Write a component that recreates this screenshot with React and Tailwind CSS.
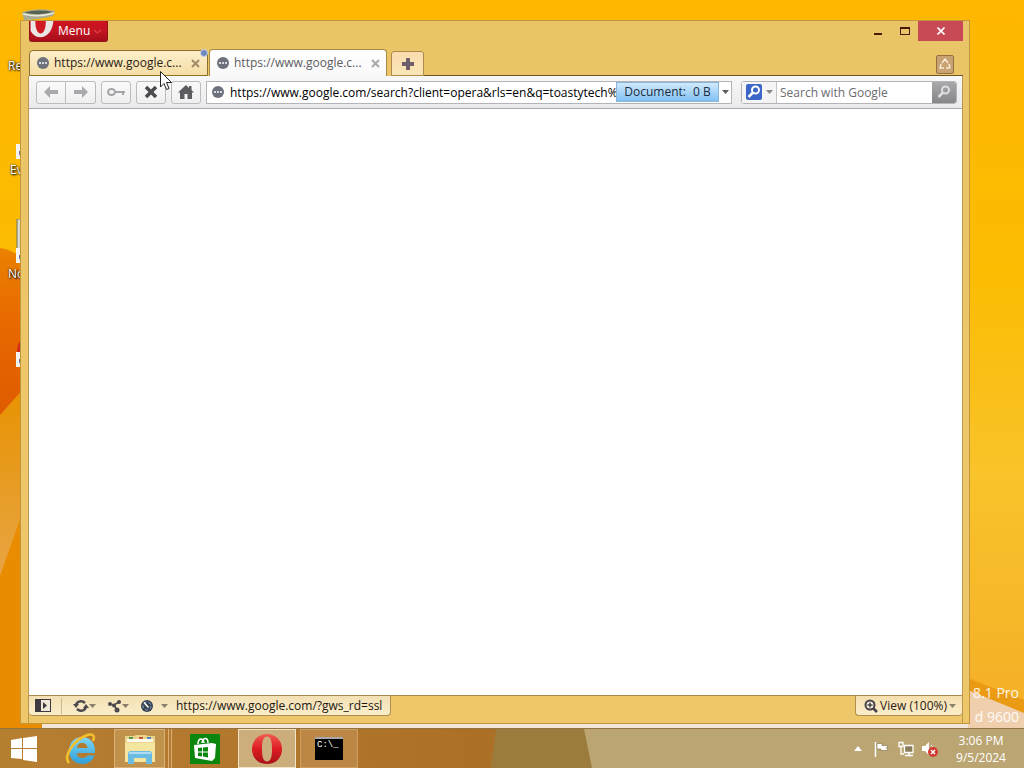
import React from "react";

const Wallpaper = () => (
  <svg
    className="absolute inset-0 w-full h-full"
    viewBox="0 0 1024 728"
    preserveAspectRatio="none"
    aria-hidden="true"
  >
    <defs>
      <linearGradient id="sky" x1="0" y1="0" x2="0" y2="1">
        <stop offset="0" stopColor="#ffb700" />
        <stop offset="0.38" stopColor="#fbbc02" />
        <stop offset="0.65" stopColor="#f9c32a" />
        <stop offset="1" stopColor="#f4ae28" />
      </linearGradient>
      <linearGradient id="hill" x1="0" y1="0" x2="0" y2="1">
        <stop offset="0" stopColor="#ea8200" />
        <stop offset="0.4" stopColor="#e86a00" />
        <stop offset="1" stopColor="#df5a00" />
      </linearGradient>
      <linearGradient id="facet" x1="0" y1="388" x2="0" y2="580" gradientUnits="userSpaceOnUse">
        <stop offset="0" stopColor="#e89200" />
        <stop offset="0.4" stopColor="#e79a1c" />
        <stop offset="1" stopColor="#e9a545" />
      </linearGradient>
    </defs>
    <rect width="1024" height="728" fill="url(#sky)" />
    <path d="M0 248 Q14 250 24 260 V420 H0Z" fill="url(#hill)" />
    <path d="M0 415 L24 388 V728 H0Z" fill="url(#facet)" />
    <path d="M0 576 L24 508 V722 L42 722 V728 H0Z" fill="#ea8c00" />
    <path d="M42 722 H1024 V728 H42Z" fill="#f3e6d8" />
    <path d="M968 688 L1024 712 V728 H968Z" fill="#f0cfae" />
    <path d="M968 678 L1024 700 V713 L968 690Z" fill="#eb9a14" />
  </svg>
);

const Label = ({ children, className }) => (
  <span
    className={`absolute text-xs leading-4 text-white [text-shadow:1px_1px_2px_#000,0_0_2px_#000] ${className}`}
  >
    {children}
  </span>
);

const ShortcutArrow = ({ className }) => (
  <svg className={`absolute w-4 h-4 ${className}`} viewBox="0 0 16 16">
    <rect width="16" height="15" fill="#f4f4f4" />
    <path d="M3 12 V7 H6 V4 L11 8 L6 12 V10 H4Z" fill="#5a6f95" />
  </svg>
);

const DesktopIcons = () => (
  <>
    <Label className="left-2 top-[58px]">Re</Label>
    <ShortcutArrow className="left-4 top-36" />
    <Label className="left-[10px] top-[162px]">Ev</Label>
    <svg className="absolute left-4 top-[219px] w-4 h-8" viewBox="0 0 16 32">
      <rect x="1" width="15" height="30" fill="#d9dccb" stroke="#6c7466" />
    </svg>
    <ShortcutArrow className="left-4 top-[248px]" />
    <Label className="left-2 top-[266px]">No</Label>
    <svg className="absolute left-4 top-[336px] w-4 h-4" viewBox="0 0 16 16">
      <path d="M1 16 Q1 6 8 1 H16 V16Z" fill="#d3281c" />
    </svg>
    <ShortcutArrow className="left-4 top-[352px]" />
  </>
);

const RecycleBin = () => (
  <svg className="absolute left-5 top-2 w-9 h-3" viewBox="0 0 36 12" aria-hidden="true">
    <path d="M2 4 Q18 -1 35 3 L33 8 Q18 12 4 12Z" fill="#a9ac92" />
    <path d="M4 4.500 Q18 1 33 4 Q20 8 4 4.500Z" fill="#566152" />
    <path d="M3 6 Q18 10 34 5" stroke="#e9ead8" strokeWidth="1.500" fill="none" />
  </svg>
);

const OperaO = ({ className }) => (
  <svg className={className} viewBox="0 0 32 32" aria-hidden="true">
    <defs>
      <linearGradient id="operaRed" x1="0" y1="0" x2="0" y2="1">
        <stop offset="0" stopColor="#f25a52" />
        <stop offset="0.5" stopColor="#dc1c22" />
        <stop offset="1" stopColor="#a81016" />
      </linearGradient>
    </defs>
    <path
      fillRule="evenodd"
      fill="url(#operaRed)"
      d="M16 1 C24.500 1 31 7.500 31 16 C31 25 24.500 31 16 31 C7.500 31 1 25 1 16 C1 7.500 7.500 1 16 1Z M16 3.500 C12 3.500 11 9 11 16 C11 23 12 28.500 16 28.500 C20 28.500 21 23 21 16 C21 9 20 3.500 16 3.500Z"
    />
  </svg>
);

const SiteIcon = () => (
  <svg className="w-3 h-3 shrink-0" viewBox="0 0 12 12" aria-hidden="true">
    <circle cx="6" cy="6" r="6" fill="#6d717b" />
    <circle cx="3" cy="6" r="1" fill="#fff" />
    <circle cx="6" cy="6" r="1" fill="#fff" />
    <circle cx="9" cy="6" r="1" fill="#fff" />
  </svg>
);

const Caret = ({ className = "text-[#8b806c]" }) => (
  <svg className={`w-[7px] h-1 shrink-0 ${className}`} viewBox="0 0 7 4" aria-hidden="true">
    <path d="M0 0 H7 L3.500 4Z" fill="currentColor" />
  </svg>
);

const CloseX = ({ className }) => (
  <svg className={`w-[9px] h-[9px] ${className}`} viewBox="0 0 9 9" aria-hidden="true">
    <path d="M1 1 L8 8 M8 1 L1 8" stroke="currentColor" strokeWidth="2" />
  </svg>
);

const Magnifier = ({ className }) => (
  <svg className={className} viewBox="0 0 16 16" aria-hidden="true">
    <circle cx="9.500" cy="6" r="3.500" fill="none" stroke="currentColor" strokeWidth="2" />
    <path d="M7 8.500 L2.500 13" stroke="currentColor" strokeWidth="2.500" />
  </svg>
);

const TitleBar = () => (
  <div className="flex items-start justify-between h-7">
    <button className="flex items-center h-[21px] w-[79px] rounded-b-[3px] border border-t-0 border-[#8e1417] bg-linear-to-b from-[#d0131f] via-[#c31522] to-[#a60d19] text-xs text-white">
      <svg className="w-6 h-full shrink-0" viewBox="0 0 24 21" aria-hidden="true">
        <path d="M0 0 H24 C23 10 18 17 10 17 C5 17 2 14 0 10Z" fill="#e9e6e4" />
        <path d="M5 0 H16 C16 8 14 13 10.500 13 C7 13 5 8 5 0Z" fill="#cf1a22" />
      </svg>
      <span className="ml-1">Menu</span>
      <svg className="ml-1 w-[7px] h-[5px]" viewBox="0 0 7 5" aria-hidden="true">
        <path d="M0 1 L3.500 4 L7 1" fill="none" stroke="#ee5c5c" />
      </svg>
    </button>
    <div className="flex h-5">
      <button aria-label="Minimize" className="w-[27px] flex justify-center items-center">
        <svg className="w-2 h-5" viewBox="0 0 8 20">
          <rect y="12" width="8" height="2" fill="#4a1a08" />
        </svg>
      </button>
      <button aria-label="Maximize" className="w-[27px] flex justify-center items-center">
        <svg className="w-[10px] h-5" viewBox="0 0 10 20">
          <path d="M0 6 H10 V14 H0Z M1 8 V13 H9 V8Z" fill="#4a1a08" fillRule="evenodd" />
        </svg>
      </button>
      <button
        aria-label="Close"
        className="w-[45px] flex justify-center items-center bg-[#c84a55] text-white"
      >
        <svg className="w-2 h-2" viewBox="0 0 8 8">
          <path d="M0.500 0.500 L7.500 7.500 M7.500 0.500 L0.500 7.500" stroke="currentColor" strokeWidth="1.600" />
        </svg>
      </button>
    </div>
  </div>
);

const TabBar = () => (
  <div className="flex items-end h-[27px]">
    <div className="relative flex items-center w-[179px] h-[26px] pl-[7px] pr-[7px] rounded-t-[4px] border border-[#8f6f2c] bg-linear-to-b from-[#fdefc9] to-[#f5dda6] text-[#2a2116]">
      <SiteIcon />
      <button className="ml-[5px] flex-1 text-left whitespace-nowrap">https://www.google.c...</button>
      <button aria-label="Close tab">
        <CloseX className="text-[#a08b66]" />
      </button>
      <span className="absolute -top-[2px] -right-[1px] w-2 h-2 rounded-full border border-[#c9d3ea] bg-[#7088bd]"></span>
    </div>
    <div className="flex items-center w-[178px] h-[27px] ml-px pl-[7px] pr-[6px] rounded-t-[4px] border border-b-0 border-[#a88a45] bg-linear-to-b from-white to-[#f8f8f8] text-[#5c5c62]">
      <SiteIcon />
      <button className="ml-[5px] flex-1 text-left whitespace-nowrap">https://www.google.c...</button>
      <button aria-label="Close tab">
        <CloseX className="text-[#aaaaac]" />
      </button>
    </div>
    <button
      aria-label="New tab"
      className="flex items-center justify-center w-[33px] h-[25px] ml-1 rounded-t-[3px] border border-[#b08a4a] bg-linear-to-b from-[#fbdcae] to-[#f9e6b8]"
    >
      <svg className="w-3 h-3" viewBox="0 0 12 12">
        <path d="M4 0 H8 V4 H12 V8 H8 V12 H4 V8 H0 V4 H4Z" fill="#6f5f68" />
      </svg>
    </button>
    <div className="flex-1 h-full pr-[9px] border-b border-[#6f5320] flex justify-end items-center">
      <button
        aria-label="Closed tabs"
        className="flex items-center justify-center w-[18px] h-[19px] mt-1 rounded-[2px] border border-[#96713f] bg-[#c9a273]"
      >
        <svg className="w-3 h-3" viewBox="0 0 12 12">
          <path
            d="M3 5 L6 1 L9 5 M2 6 L1 10 H5 M11 10 L10 6 M7 10 H11"
            fill="none"
            stroke="#f8e8d4"
            strokeWidth="1.500"
          />
        </svg>
      </button>
    </div>
  </div>
);

const ToolButton = ({ label, className = "rounded-[3px]", children }) => (
  <button
    aria-label={label}
    className={`flex items-center justify-center w-[30px] h-[23px] border border-[#bcbcc0] bg-linear-to-b from-[#fafafa] to-[#efeff0] ${className}`}
  >
    {children}
  </button>
);

const Toolbar = () => (
  <div className="flex items-center h-[33px] pl-[7px] pr-[5px] border-b border-[#a9a9ad] bg-linear-to-b from-[#f8f8f8] to-[#eaeaec]">
    <ToolButton label="Back" className="rounded-l-[3px]">
      <svg className="w-[14px] h-3" viewBox="0 0 14 12">
        <path d="M0 6 L6 0 V4 H14 V8 H6 V12Z" fill="#aaaaae" />
      </svg>
    </ToolButton>
    <ToolButton label="Forward" className="rounded-r-[3px] border-l-0">
      <svg className="w-[14px] h-3" viewBox="0 0 14 12">
        <path d="M14 6 L8 0 V4 H0 V8 H8 V12Z" fill="#aaaaae" />
      </svg>
    </ToolButton>
    <div className="flex gap-[5px] ml-[5px]">
      <ToolButton label="Wand">
        <svg className="w-[18px] h-[10px]" viewBox="0 0 18 10">
          <ellipse cx="4.500" cy="5" rx="3.500" ry="3" fill="none" stroke="#a6a6aa" strokeWidth="2" />
          <path d="M8 4 H18 V6 H17 V8 H15 V6 H8Z" fill="#a6a6aa" />
        </svg>
      </ToolButton>
      <ToolButton label="Stop">
        <svg className="w-[14px] h-[14px]" viewBox="0 0 14 14">
          <path d="M2 2 L12 12 M12 2 L2 12" stroke="#4a4a4e" strokeWidth="3.500" />
        </svg>
      </ToolButton>
      <ToolButton label="Home">
        <svg className="w-4 h-[14px]" viewBox="0 0 16 14">
          <path d="M8 0 L11 3 V1 H13.500 V5 L16 7.500 H14 V14 H9.500 V9 H6.500 V14 H2 V7.500 H0Z" fill="#5c5c60" />
        </svg>
      </ToolButton>
    </div>
    <div className="flex flex-1 items-center min-w-0 h-[23px] ml-[5px] pl-[5px] border border-[#b4b4b8] bg-white">
      <SiteIcon />
      <input
        aria-label="Address"
        className="flex-1 min-w-0 h-full pt-px ml-[6px] outline-none text-black"
        defaultValue="https://www.google.com/search?client=opera&rls=en&q=toastytech%"
      />
      <div className="flex items-center justify-center gap-[7px] w-[103px] h-5 border border-[#8ab4d8] bg-linear-to-b from-[#cfe9fc] via-[#a9d6f8] to-[#7fc0f2] text-[#1d2b3c]">
        <span>Document:</span>
        <span>0 B</span>
      </div>
      <button aria-label="Address history" className="flex items-center justify-center w-3 h-full">
        <Caret className="text-[#5b5b60]" />
      </button>
    </div>
    <div className="flex items-center w-[216px] h-[23px] ml-[9px] rounded-[3px] border border-[#b4b4b8] bg-white">
      <button
        aria-label="Search engine"
        className="flex items-center gap-1 h-full w-[35px] pl-1 border-r border-[#c4c4c8] bg-[#f4f4f5]"
      >
        <span className="flex items-center justify-center w-4 h-4 rounded-[2px] bg-[#3c66c8] text-white">
          <Magnifier className="w-4 h-4" />
        </span>
        <Caret className="text-[#88888c]" />
      </button>
      <input
        aria-label="Search"
        placeholder="Search with Google"
        className="flex-1 min-w-0 h-full pt-px pl-[3px] outline-none placeholder:text-[#6c6c70]"
      />
      <button
        aria-label="Go"
        className="flex items-center justify-center w-6 h-full rounded-r-[2px] bg-linear-to-b from-[#a9a9ab] to-[#87878a] text-[#dededf]"
      >
        <Magnifier className="w-4 h-4" />
      </button>
    </div>
  </div>
);

const StatusBar = () => (
  <div className="flex items-start justify-between h-[28px] border-t border-[#a98a48]">
    <div className="flex items-center h-5 pl-[6px] pr-2 rounded-b-[4px] border border-t-0 border-l-0 border-[#b0904e] bg-linear-to-b from-[#f3e0b4] to-[#fbedca] text-[#1c1710]">
      <button aria-label="Panels">
        <svg className="w-4 h-[13px]" viewBox="0 0 16 13">
          <rect x="0.500" y="0.500" width="15" height="12" fill="#f1e6d8" stroke="#3d3a42" />
          <rect width="6" height="13" fill="#3d3a42" />
          <path d="M8 3 L12 6.500 L8 10Z" fill="#3d3a42" />
        </svg>
      </button>
      <div className="w-px h-4 ml-[10px] bg-[#cdb78a]"></div>
      <button aria-label="Synchronize" className="flex items-center ml-[11px]">
        <svg className="w-4 h-[14px]" viewBox="0 0 16 14">
          <path
            d="M3 6 C4 2 9 1 12 4 M13 8 C12 12 7 13 4 10"
            fill="none"
            stroke="#4c4a4e"
            strokeWidth="2.500"
          />
          <path d="M0 5 H6 L3 9Z M10 9 H16 L13 5Z" fill="#4c4a4e" />
        </svg>
        <Caret />
      </button>
      <button aria-label="Unite" className="flex items-center ml-3">
        <svg className="w-[14px] h-[14px]" viewBox="0 0 14 14">
          <path d="M2 5 L6 6 L11 3 M6 6 L9 11" fill="none" stroke="#4c4a4e" strokeWidth="1.500" />
          <circle cx="2" cy="5" r="2" fill="#4c4a4e" />
          <circle cx="11" cy="3" r="2" fill="#4c4a4e" />
          <circle cx="6" cy="6.500" r="2" fill="#4c4a4e" />
          <circle cx="9" cy="11" r="2.500" fill="#4c4a4e" />
        </svg>
        <Caret />
      </button>
      <button aria-label="Turbo" className="flex items-center gap-2 ml-3">
        <svg className="w-3 h-3" viewBox="0 0 12 12">
          <circle cx="6" cy="6" r="6" fill="#39424f" />
          <circle cx="6" cy="6" r="4" fill="none" stroke="#86a9d8" strokeDasharray="3 2" />
          <path d="M3 2.500 L7.500 7.500" stroke="#fff" strokeWidth="1.500" />
        </svg>
        <Caret />
      </button>
      <span className="ml-2">https://www.google.com/?gws_rd=ssl</span>
    </div>
    <button className="flex items-center h-5 pl-2 pr-[6px] rounded-b-[4px] border border-t-0 border-r-0 border-[#b0904e] bg-linear-to-b from-[#f6dfae] to-[#fbedca] text-[#2a2116]">
      <svg className="w-[14px] h-[14px]" viewBox="0 0 14 14" aria-hidden="true">
        <circle cx="6" cy="6" r="4.500" fill="#fbf1da" stroke="#46434a" strokeWidth="2" />
        <path d="M6 3.500 V8.500 M3.500 6 H8.500" stroke="#46434a" strokeWidth="1.500" />
        <path d="M9.500 9.500 L13 13" stroke="#46434a" strokeWidth="2.500" />
      </svg>
      <span className="mx-[2px]">View (100%)</span>
      <Caret />
    </button>
  </div>
);

const BrowserWindow = () => (
  <div className="absolute left-5 right-[54px] top-5 bottom-1 flex flex-col pl-[7px] pr-[6px] border border-[#c2953f] bg-linear-to-b from-[#eac568] to-[#eec76a]">
    <div className="pl-px">
      <TitleBar />
      <TabBar />
    </div>
    <div className="flex flex-col flex-1 border-x border-[#b9974e]">
      <Toolbar />
      <main className="flex-1 bg-white"></main>
      <StatusBar />
    </div>
  </div>
);

const Cursor = () => (
  <svg className="absolute left-40 top-[71px] w-3 h-5" viewBox="0 0 12 20" aria-hidden="true">
    <path
      d="M0.500 0.500 V16 L4 12.500 L6.500 18.500 L9 17.500 L6.500 11.500 H11.500Z"
      fill="#fff"
      stroke="#222"
    />
  </svg>
);

const TaskButton = ({ label, className = "", children }) => (
  <button
    aria-label={label}
    className={`flex items-center justify-center w-[58px] h-full ${className}`}
  >
    {children}
  </button>
);

const Taskbar = () => (
  <div className="relative flex h-10 shrink-0 border-t border-[#93743f]">
    <svg
      className="absolute inset-0 w-full h-full"
      viewBox="0 0 1024 40"
      preserveAspectRatio="none"
      aria-hidden="true"
    >
      <defs>
        <linearGradient id="barLeft" x1="0" y1="0" x2="1" y2="0">
          <stop offset="0" stopColor="#b57f30" />
          <stop offset="0.3" stopColor="#b47a30" />
          <stop offset="1" stopColor="#ab7026" />
        </linearGradient>
      </defs>
      <rect width="1024" height="40" fill="#bba573" />
      <path d="M0 0 H584 L592 40 H0Z" fill="#9c7c3c" />
      <path d="M0 0 H496 L491 40 H0Z" fill="url(#barLeft)" />
    </svg>
    <div className="relative flex flex-1 gap-1">
      <button aria-label="Start" className="flex items-center justify-center w-12 h-full">
        <svg className="w-[26px] h-[26px]" viewBox="0 0 26 26">
          <path d="M0 4 L11 2 V12 H0Z M12 2 L26 0 V12 H12Z M0 13 H11 V23 L0 22Z M12 13 H26 V26 L12 24Z" fill="#fff" />
        </svg>
      </button>
      <TaskButton label="Internet Explorer">
        <svg className="w-8 h-8" viewBox="0 0 32 32">
          <defs>
            <linearGradient id="ieBlue" x1="0" y1="0" x2="0" y2="1">
              <stop offset="0" stopColor="#7fd6f5" />
              <stop offset="1" stopColor="#2f9fd8" />
            </linearGradient>
          </defs>
          <path
            fillRule="evenodd"
            fill="url(#ieBlue)"
            d="M17 4 C25 4 30 10 30 17 V20 H12 C12 23 14 25 17.500 25 C20 25 21.500 24 22.500 22.500 H29.500 C27.500 28 23 31 17.500 31 C9.500 31 4 25 4 17.500 C4 10 9.500 4 17 4Z M12 15 H22.500 C22.500 12 20 10 17 10 C14 10 12 12 12 15Z"
          />
          <path
            d="M4 30 C-2 24 8 8 20 3 C26 0.500 31 1 28 8"
            fill="none"
            stroke="#f6c02c"
            strokeWidth="2.500"
          />
        </svg>
      </TaskButton>
      <div className="flex w-[58px] h-full">
        <button
          aria-label="File Explorer"
          className="flex items-center justify-center flex-1 border border-[#d8b078] bg-[#c0924c]"
        >
          <svg className="w-8 h-[30px]" viewBox="0 0 32 30">
            <path d="M1 2 H10 L12 1 H22 L24 2 H31 V28 H1Z" fill="#e9d48a" />
            <path d="M3 5 H29 V8 H3Z" fill="#fffdf0" />
            <path d="M5 3 H9 V5 H5Z" fill="#4f9a4a" />
            <path d="M15 3 H19 V5 H15Z" fill="#c7573c" />
            <path d="M23 3 H27 V5 H23Z" fill="#4c86bd" />
            <path d="M1 9 H31 V28 H1Z" fill="#f4e6a0" />
            <path d="M4 30 V20 Q4 17 7 17 H25 Q28 17 28 20 V30 H22 V24 H10 V30Z" fill="#6cbbe2" />
            <path d="M5 19 H27" stroke="#c4e8f6" strokeWidth="1.500" />
          </svg>
        </button>
        <div className="w-1 h-full border-r border-[#d8b078]"></div>
        <div className="w-[3px] h-full border-r border-[#d8b078]"></div>
      </div>
      <TaskButton label="Store">
        <svg className="w-[30px] h-[30px]" viewBox="0 0 30 30">
          <rect width="30" height="30" fill="#0b870f" />
          <path d="M4 11 L22 9 L26 10 L25 24 L22 27 L5 24Z" fill="#fff" />
          <path d="M8 10 C8 4 13 3 14 9 M12 9 C13 3 18 3 18 9" fill="none" stroke="#fff" strokeWidth="1.500" />
          <path d="M8 14 L12 13.500 V17.500 H8Z M13 13.500 L18 13 V17.500 H13Z M8 18.500 H12 V22.500 L8 22Z M13 18.500 H18 V23.500 L13 22.500Z" fill="#0b870f" />
        </svg>
      </TaskButton>
      <TaskButton label="Opera" className="border border-[#f2e4c8] bg-[#cbae7c]">
        <OperaO className="w-8 h-8" />
      </TaskButton>
      <TaskButton label="Command Prompt" className="border border-[#cf9f62] bg-[#bc8744]">
        <span className="flex w-7 h-[23px] bg-black border-t-2 border-[#a9a9a9] pl-[2px] text-[9px] leading-[12px] font-['Liberation_Mono',monospace] text-white whitespace-nowrap overflow-hidden">
          C:\_
        </span>
      </TaskButton>
    </div>
    <div className="relative flex items-center text-white">
      <button aria-label="Show hidden icons" className="mr-3">
        <svg className="w-2 h-[5px]" viewBox="0 0 8 5">
          <path d="M0 5 L4 0 L8 5Z" fill="#fff" />
        </svg>
      </button>
      <div className="flex gap-2">
        <svg className="w-4 h-4" viewBox="0 0 16 16" role="img" aria-label="Action Center">
          <path d="M1.500 1 V16" stroke="#fff" strokeWidth="1.500" />
          <path d="M3 2.500 H8 V4.500 H14 L12.500 7 L14 9.500 H7 V8 H3Z" fill="#fff" stroke="#6c5c3c" strokeWidth="0.500" />
        </svg>
        <svg className="w-4 h-4" viewBox="0 0 16 16" role="img" aria-label="Network">
          <path d="M6.500 4.500 H15 V11.500 H6.500Z" fill="#8c7d5a" stroke="#fff" strokeWidth="1.300" />
          <path d="M7 14.500 H15 M11 12 V14" stroke="#fff" strokeWidth="1.500" />
          <path d="M1 1.500 H5 V5.500 H1Z M3 5.500 V13 H6" fill="none" stroke="#fff" strokeWidth="1.300" />
        </svg>
        <svg className="w-4 h-4" viewBox="0 0 16 16" role="img" aria-label="Volume muted">
          <path d="M0 5 H3 L7 1 V14 L3 10 H0Z" fill="#fff" />
          <path d="M9 4 Q11 5 11 8" fill="none" stroke="#fff" />
          <circle cx="11" cy="11" r="5" fill="#d13a33" />
          <path d="M9 9 L13 13 M13 9 L9 13" stroke="#fff" strokeWidth="1.500" />
        </svg>
      </div>
      <div className="w-[86px] text-center text-xs leading-[17px]">
        <div>3:06 PM</div>
        <div>9/5/2024</div>
      </div>
    </div>
  </div>
);

const App = () => {
  return (
    <div className="flex flex-col h-screen overflow-hidden text-xs font-['Open_Sans','Noto_Sans',sans-serif]">
      <div className="relative flex-1">
        <Wallpaper />
        <DesktopIcons />
        <div className="absolute right-[5px] -bottom-px text-right text-sm leading-6 text-white/90">
          <div>8.1 Pro</div>
          <div>d 9600</div>
        </div>
        <BrowserWindow />
        <RecycleBin />
        <Cursor />
      </div>
      <Taskbar />
    </div>
  );
};

export default App;
